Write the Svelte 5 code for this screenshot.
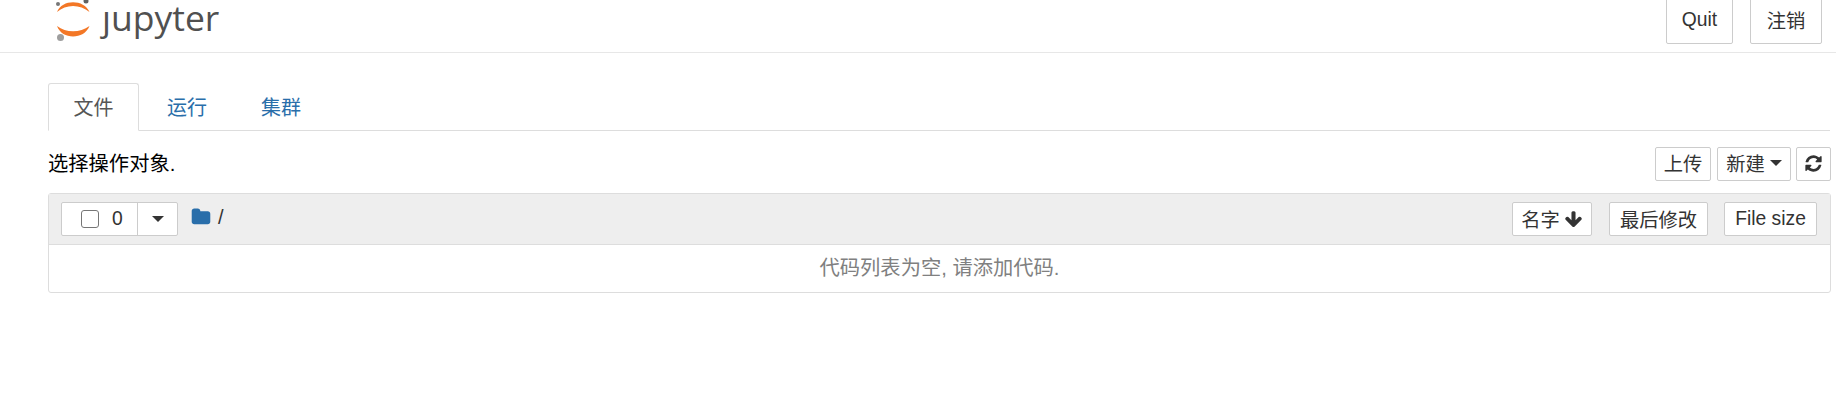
<script>
	let tabs = ["文件", "运行", "集群"];
</script>

<header class="top">
	<div class="logo">
		<svg width="50" height="42" viewBox="46 0 50 42">
			<path fill="#f37726" d="M57 12C62 -1 84 -1 89.5 12C80 4 66 4 57 12Z" />
			<path fill="#f37726" d="M57 26C66 33 80 33 89.5 26C84 40 62 40 57 26Z" />
			<circle fill="#9e9e9e" cx="60.5" cy="37.5" r="3.5" />
			<circle fill="#767677" cx="58" cy="4" r="2" />
			<circle fill="#616262" cx="86" cy="1" r="2.5" />
		</svg>
		<span class="word">ȷupyter</span>
	</div>
	<div class="top-btns">
		<button class="btn tall">Quit</button>
		<button class="btn tall">注销</button>
	</div>
</header>

<main>
	<ul class="tabs">
		{#each tabs as tab, i}
			<li class:active={i === 0}>{tab}</li>
		{/each}
	</ul>

	<div class="toolbar">
		<span>选择操作对象.</span>
		<div class="actions">
			<button class="btn small">上传</button>
			<button class="btn small">新建 <i class="caret"></i></button>
			<button class="btn small icon" aria-label="刷新">
				<svg width="19" height="19" viewBox="0 0 1792 1792"><path fill="#333" d="M1639 1056q0 5-1 7-64 268-268 434.5t-478 166.5q-146 0-282.5-55t-243.5-157l-129 129q-19 19-45 19t-45-19-19-45v-448q0-26 19-45t45-19h448q26 0 45 19t19 45-19 45l-137 137q71 66 161 102t187 36q134 0 250-65t186-179q11-17 53-117 8-23 30-23h192q13 0 22.5 9.5t9.5 22.5zm25-800v448q0 26-19 45t-45 19h-448q-26 0-45-19t-19-45 19-45l138-138q-148-137-349-137-134 0-250 65t-186 179q-11 17-53 117-8 23-30 23h-199q-13 0-22.5-9.5t-9.5-22.5v-7q65-268 270-434.5t480-166.5q146 0 284 55.5t245 156.5l130-129q19-19 45-19t45 19 19 45z" /></svg>
			</button>
		</div>
	</div>

	<section class="list">
		<div class="list-head">
			<div class="select">
				<div class="sel-left"><span class="check"></span><span class="count">0</span></div>
				<div class="sel-right"><i class="caret"></i></div>
			</div>
			<svg class="folder" width="20" height="20" viewBox="0 0 1792 1792"><path fill="#296eaa" d="M1728 608v704q0 92-66 158t-158 66h-1216q-92 0-158-66t-66-158v-960q0-92 66-158t158-66h320q92 0 158 66t66 158v32h672q92 0 158 66t66 158z" /></svg>
			<span class="slash">/</span>
			<div class="sorts">
				<button class="btn small sort name">名字
					<svg width="19" height="19" viewBox="0 0 1792 1792"><path fill="#333" d="M1675 832q0 53-37 90l-651 652q-39 37-91 37-53 0-90-37l-651-652q-38-36-38-90 0-53 38-91l74-75q39-37 91-37 53 0 90 37l294 294v-704q0-52 38-90t90-38h128q52 0 90 38t38 90v704l294-294q37-37 90-37 52 0 91 37l75 75q37 39 37 91z" /></svg>
				</button>
				<button class="btn small sort modified">最后修改</button>
				<button class="btn small sort size">File size</button>
			</div>
		</div>
		<div class="empty">代码列表为空, 请添加代码.</div>
	</section>
</main>

<style>
	:global(body) {
		margin: 0;
		background: #fff;
		color: #000;
		font-family: "Liberation Sans", "Noto Sans CJK SC", sans-serif;
		font-size: 20.3px;
	}

	.top {
		display: flex;
		justify-content: space-between;
		height: 52px;
		border-bottom: 1px solid #e7e7e7;
		padding: 0 14px 0 46px;
		overflow: hidden;
	}

	.logo {
		display: flex;
		height: 42px;
		align-items: flex-start;
	}

	.word {
		margin: 3px 0 0 6px;
		font-family: "Open Sans", sans-serif;
		font-size: 35.5px;
		line-height: 28px;
		color: #505050;
	}

	.top-btns {
		display: flex;
		gap: 17px;
		align-items: flex-start;
	}

	.btn {
		background: #fff;
		border: 1px solid #ccc;
		border-radius: 2px;
		color: #333;
		font-family: inherit;
		padding: 0;
		display: inline-flex;
		align-items: center;
		justify-content: center;
	}

	.tall {
		height: 54px;
		margin-top: -10px;
		width: 67px;
		font-size: 19.3px;
		padding-top: 5px;
		box-sizing: border-box;
	}

	.tall + .tall {
		width: 72px;
	}

	main {
		padding: 30px 5px 0 48px;
	}

	.tabs {
		list-style: none;
		margin: 0 1px 0 0;
		padding: 0;
		display: flex;
		height: 47px;
		border-bottom: 1px solid #ddd;
	}

	.tabs li {
		width: 94px;
		box-sizing: border-box;
		height: 48px;
		line-height: 48px;
		text-align: center;
		color: #296eaa;
		border: 1px solid transparent;
		font-size: 20px;
	}

	.tabs li.active {
		width: 91px;
		margin-right: 1px;
		color: #555;
		background: #fff;
		border-color: #ddd #ddd #fff;
		border-radius: 3px 3px 0 0;
	}

	.toolbar {
		display: flex;
		justify-content: space-between;
		align-items: center;
		height: 62px;
	}

	.actions {
		display: flex;
		gap: 6px;
		margin-top: 4px;
	}

	.small {
		height: 34px;
		font-size: 19.3px;
		box-sizing: border-box;
	}

	.actions .btn {
		width: 56px;
		padding-bottom: 2px;
	}

	.actions .btn:nth-child(2) {
		width: 74px;
		gap: 5px;
	}

	.actions .icon {
		width: 35px;
		margin-left: -1px;
	}

	.caret {
		display: inline-block;
		border-top: 6px solid #333;
		border-left: 6px solid transparent;
		border-right: 6px solid transparent;
	}

	.list {
		border: 1px solid #ddd;
		border-radius: 3px;
		height: 98px;
	}

	.list-head {
		display: flex;
		align-items: flex-start;
		height: 51px;
		background: #eee;
		border-bottom: 1px solid #ddd;
		padding: 8px 13px 0 12px;
		box-sizing: border-box;
	}

	.select {
		display: flex;
		width: 117px;
		height: 34px;
		box-sizing: border-box;
		background: #fff;
		border: 1px solid #ccc;
		border-radius: 2px;
	}

	.sel-left {
		width: 76px;
		border-right: 1px solid #ccc;
		display: flex;
		align-items: center;
		padding-left: 19px;
		box-sizing: border-box;
		gap: 13px;
		font-size: 19.3px;
		color: #333;
	}

	.check {
		width: 18px;
		height: 18px;
		box-sizing: border-box;
		border: 1.5px solid #767676;
		border-radius: 3px;
	}

	.sel-right {
		flex: 1;
		display: flex;
		align-items: center;
		justify-content: center;
	}

	.folder {
		margin: 5px 0 0 13px;
	}

	.slash {
		margin: 4px 0 0 7px;
		font-size: 20px;
		color: #333;
	}

	.sorts {
		margin-left: auto;
		display: flex;
		gap: 16px;
	}

	.sort.name {
		width: 80px;
		gap: 4px;
		margin-right: 1px;
	}

	.sort.modified {
		width: 99px;
	}

	.sort.size {
		width: 93px;
	}

	.empty {
		text-align: center;
		color: #808080;
		font-size: 20.3px;
		line-height: 46px;
	}
</style>
